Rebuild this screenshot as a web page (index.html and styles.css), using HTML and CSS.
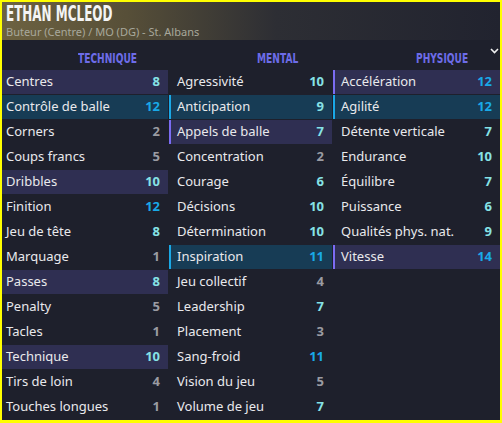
FILE: index.html
```html
<!DOCTYPE html>
<html lang="fr">
<head>
<meta charset="utf-8">
<link rel="stylesheet" href="styles.css">
</head>
<body>
<div class="frame">
  <header class="head">
    <div class="name"><span>ETHAN MCLEOD</span></div>
    <div class="role">Buteur (Centre) / MO (DG) - St. Albans</div>
  </header>
  <div class="cols">
    <section class="col c1">
      <h2 class="title"><span>TECHNIQUE</span></h2>
      <div class="row hp"><span>Centres</span><b class="mid">8</b></div>
      <div class="row ht"><span>Contrôle de balle</span><b class="hi">12</b></div>
      <div class="row"><span>Corners</span><b class="lo">2</b></div>
      <div class="row"><span>Coups francs</span><b class="lo">5</b></div>
      <div class="row hp"><span>Dribbles</span><b class="mid">10</b></div>
      <div class="row"><span>Finition</span><b class="hi">12</b></div>
      <div class="row"><span>Jeu de tête</span><b class="mid">8</b></div>
      <div class="row"><span>Marquage</span><b class="lo">1</b></div>
      <div class="row hp"><span>Passes</span><b class="mid">8</b></div>
      <div class="row"><span>Penalty</span><b class="lo">5</b></div>
      <div class="row"><span>Tacles</span><b class="lo">1</b></div>
      <div class="row hp"><span>Technique</span><b class="mid">10</b></div>
      <div class="row"><span>Tirs de loin</span><b class="lo">4</b></div>
      <div class="row"><span>Touches longues</span><b class="lo">1</b></div>
    </section>
    <section class="col c2">
      <h2 class="title"><span>MENTAL</span></h2>
      <div class="row"><span>Agressivité</span><b class="mid">10</b></div>
      <div class="row ht acc"><span>Anticipation</span><b class="mid">9</b></div>
      <div class="row hp acc"><span>Appels de balle</span><b class="mid">7</b></div>
      <div class="row"><span>Concentration</span><b class="lo">2</b></div>
      <div class="row"><span>Courage</span><b class="mid">6</b></div>
      <div class="row"><span>Décisions</span><b class="mid">10</b></div>
      <div class="row"><span>Détermination</span><b class="mid">10</b></div>
      <div class="row ht acc"><span>Inspiration</span><b class="hi">11</b></div>
      <div class="row"><span>Jeu collectif</span><b class="lo">4</b></div>
      <div class="row"><span>Leadership</span><b class="mid">7</b></div>
      <div class="row"><span>Placement</span><b class="lo">3</b></div>
      <div class="row"><span>Sang-froid</span><b class="hi">11</b></div>
      <div class="row"><span>Vision du jeu</span><b class="lo">5</b></div>
      <div class="row"><span>Volume de jeu</span><b class="mid">7</b></div>
    </section>
    <section class="col c3">
      <h2 class="title"><span>PHYSIQUE</span></h2>
      <svg class="chev" width="9" height="6" viewBox="0 0 9 6"><path d="M1 1 L4.5 4.5 L8 1" fill="none" stroke="#f0f0f0" stroke-width="1.6"/></svg>
      <div class="row hp acc"><span>Accélération</span><b class="hi">12</b></div>
      <div class="row ht acc"><span>Agilité</span><b class="hi">12</b></div>
      <div class="row"><span>Détente verticale</span><b class="mid">7</b></div>
      <div class="row"><span>Endurance</span><b class="mid">10</b></div>
      <div class="row"><span>Équilibre</span><b class="mid">7</b></div>
      <div class="row"><span>Puissance</span><b class="mid">6</b></div>
      <div class="row"><span>Qualités phys. nat.</span><b class="mid">9</b></div>
      <div class="row hp acc"><span>Vitesse</span><b class="hi">14</b></div>
    </section>
  </div>
</div>
</body>
</html>
```
FILE: styles.css
```css
* { box-sizing: border-box; margin: 0; padding: 0; }
html, body { width: 502px; height: 423px; overflow: hidden; background: #1e202c; }
body { font-family: "Noto Sans", "DejaVu Sans", sans-serif; }
.frame {
  width: 502px; height: 423px;
  border: 2px solid #ffff00;
  border-bottom-width: 3px;
  background: #1e202c;
  display: flex; flex-direction: column;
}
.head {
  height: 38px;
  padding: 1px 0 0 4px;
  background: linear-gradient(90deg, #6d6241 0%, #574f38 25%, #2d2e34 55%, #21232f 100%);
}
.name {
  height: 22px; line-height: 22px;
  font-family: "DejaVu Sans", sans-serif; font-weight: bold;
  font-size: 21px; color: #f4f4f4;
  white-space: nowrap;
}
.name span { display: inline-block; transform: scaleX(0.57); transform-origin: left center; }
.role { font-size: 11px; line-height: 14px; color: #a8a89c; }
.cols {
  flex: 1;
  display: grid;
  grid-template-columns: 166px 163px 167px;
  column-gap: 1px;
}
.col { position: relative; }
.title {
  height: 30px;
  padding-top: 11px;
  font-family: "DejaVu Sans", sans-serif;
  font-size: 14px; line-height: 14px; font-weight: bold;
  color: #6d6ce8;
  white-space: nowrap;
}
.title span { display: inline-block; transform: scaleX(0.65); transform-origin: left center; }
.c1 .title { padding-left: 76px; }
.c2 .title { padding-left: 88px; }
.c3 .title { padding-left: 83px; }
.chev { position: absolute; right: 1px; top: 8px; }
.row {
  height: 24px; margin-bottom: 1px;
  display: flex; align-items: center; justify-content: space-between;
  padding: 0 8px 2px 4px;
  font-size: 13px; color: #e9e9ec;
}
.c2 .row, .c3 .row { padding-left: 8px; }
.row.hp { background: #2f2f52; }
.row.ht { background: #173c55; }
.acc.hp { box-shadow: inset 2px 0 0 #7b6cf2; }
.acc.ht { box-shadow: inset 2px 0 0 #1aa8e6; }
.row b { font-weight: bold; font-size: 13px; }
.lo { color: #9a9ba2; }
.mid { color: #86e2e6; }
.hi { color: #19a9e8; }
```
